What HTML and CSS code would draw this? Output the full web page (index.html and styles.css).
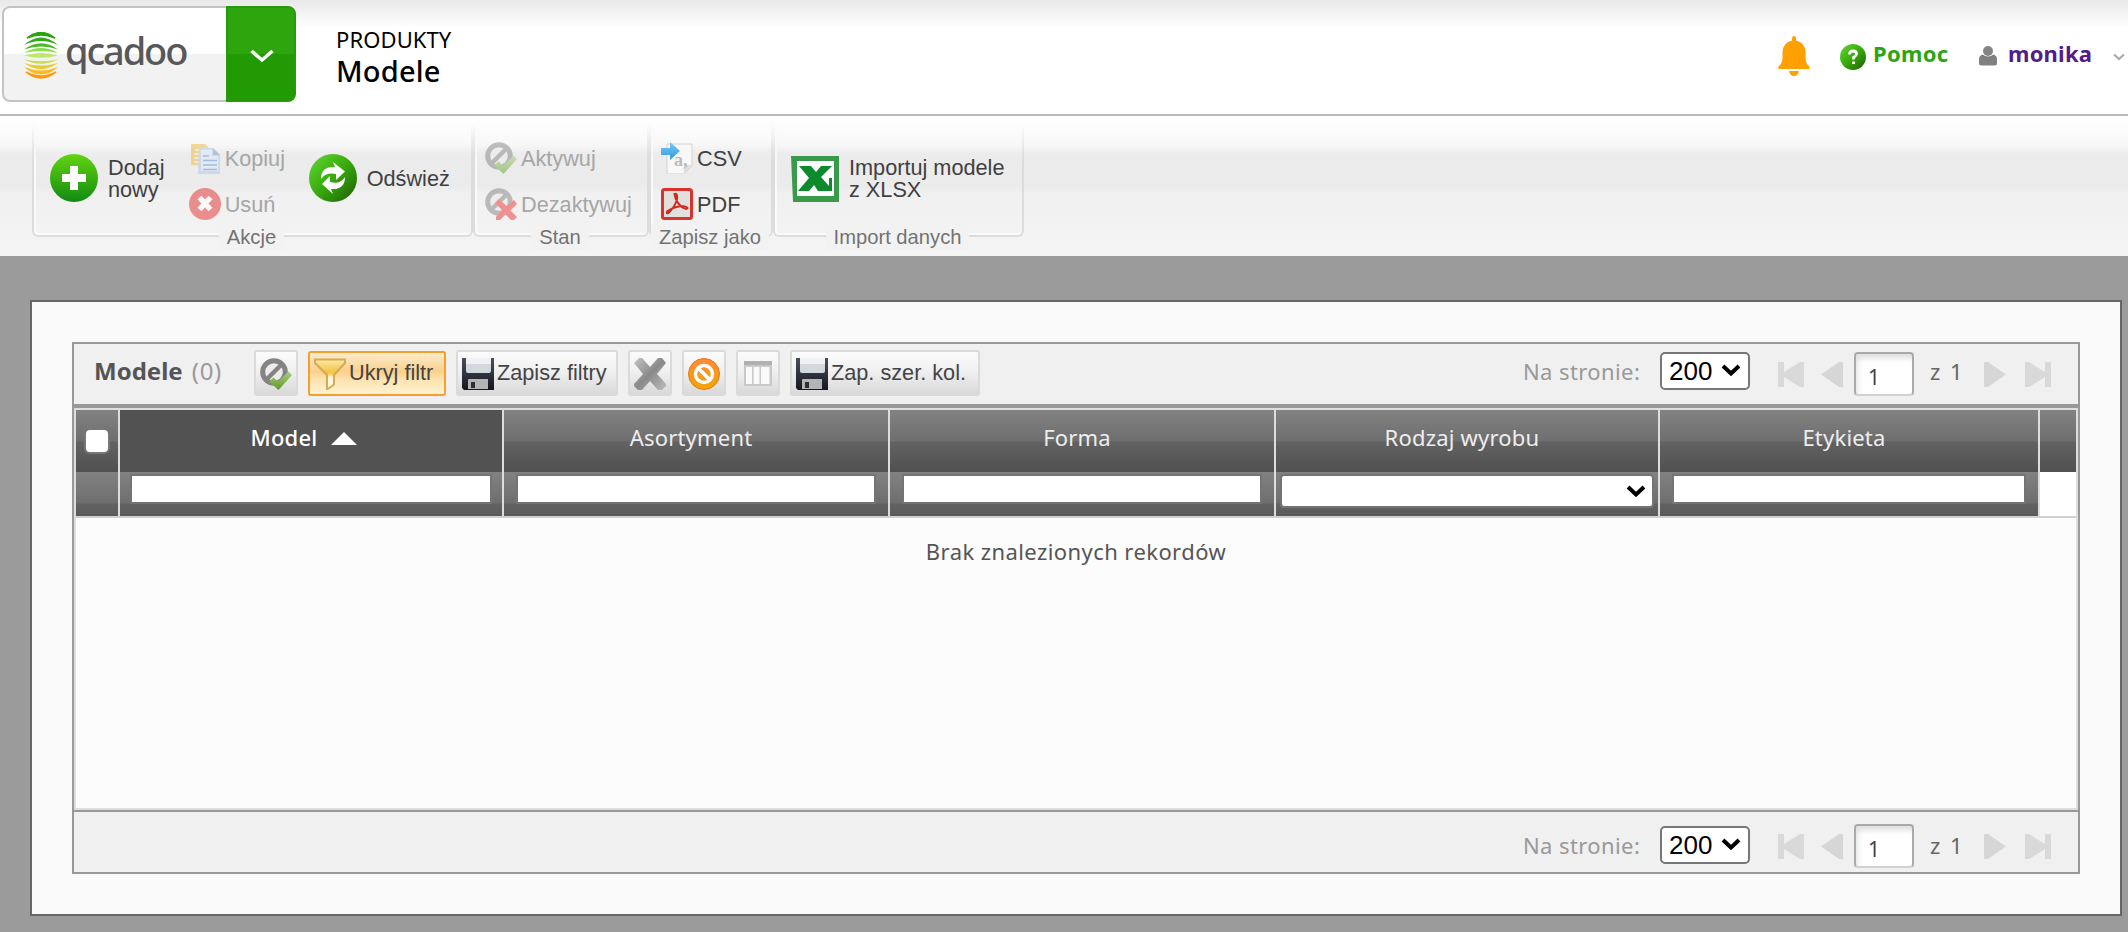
FILE: index.html
```html
<!DOCTYPE html>
<html lang="pl">
<head>
<meta charset="utf-8">
<title>qcadoo - Modele</title>
<link rel="stylesheet" href="styles.css">
</head>
<body>
<svg class="defs" width="0" height="0">
  <defs>
    <linearGradient id="gGreen" x1="0" y1="0" x2="0" y2="1"><stop offset="0" stop-color="#62d411"/><stop offset="1" stop-color="#118a12"/></linearGradient>
    <linearGradient id="gGreen2" x1="0" y1="0" x2="1" y2="1"><stop offset="0" stop-color="#63da33"/><stop offset=".5" stop-color="#38a90c"/><stop offset="1" stop-color="#1c5c04"/></linearGradient>
    <linearGradient id="gCheck" x1="0" y1="0" x2="0" y2="1"><stop offset="0" stop-color="#a9cf7c"/><stop offset="1" stop-color="#5f9a26"/></linearGradient>
    <linearGradient id="gX" x1="0" y1="0" x2="1" y2="1"><stop offset="0" stop-color="#c4c4c4"/><stop offset=".5" stop-color="#8a8a8a"/><stop offset="1" stop-color="#bdbdbd"/></linearGradient>
    <linearGradient id="gDisk" x1="0" y1="0" x2="0" y2="1"><stop offset="0" stop-color="#4a4f5c"/><stop offset="1" stop-color="#14171f"/></linearGradient>
    <linearGradient id="gOrange" x1="0" y1="0" x2="0" y2="1"><stop offset="0" stop-color="#ff8a3c"/><stop offset="1" stop-color="#f2a500"/></linearGradient>
    <linearGradient id="gArrow" x1="0" y1="0" x2="0" y2="1"><stop offset="0" stop-color="#7cc8f2"/><stop offset="1" stop-color="#2f9be0"/></linearGradient>
    <linearGradient id="gFunnel" x1="0" y1="0" x2="0" y2="1"><stop offset="0" stop-color="#fbe9a8"/><stop offset=".45" stop-color="#f2c33c"/><stop offset=".6" stop-color="#fff4d0"/><stop offset="1" stop-color="#ffffff"/></linearGradient>
  </defs>
  <symbol id="ban" viewBox="0 0 32 32"><circle cx="14" cy="14" r="11.3" fill="#ececec" stroke="#848484" stroke-width="5"/><path d="M6.5 21.5 21.5 6.5" stroke="#848484" stroke-width="4.5"/></symbol>
  <symbol id="activate" viewBox="0 0 32 32"><use href="#ban" width="32" height="32"/><path d="M9 23.5l4.5-4 4.8 4L28.5 13.500l3.500 3.500L18.500 32z" fill="url(#gCheck)"/></symbol>
  <symbol id="deactivate" viewBox="0 0 32 32"><use href="#ban" width="32" height="32"/><path d="M10 15l4-4 7.500 7 7.500-6 3 4-6.500 6.500L32 29l-3 3h-3l-5.500-5.500L15 32h-4v-3l6-7z" fill="#e33"/></symbol>
  <symbol id="disk" viewBox="0 0 32 32"><path d="M0 0h32v32H2l-2-2z" fill="url(#gDisk)"/><path d="M4 0h25v13q0 2-2 2H6q-2 0-2-2z" fill="#d3d8de"/><path d="M4 0h25v6H4z" fill="#eef0f3"/><path d="M6 22q0-1 1-1h19v10H6z" fill="#b4b4b4"/><path d="M9 24h4v6H9z" fill="#2a2e38"/></symbol>
  <symbol id="first" viewBox="0 0 26 26"><path d="M0 0h6v10L22 0h4v25h-4L6 15v10H0z" fill="#d9d9d9"/></symbol>
  <symbol id="prev" viewBox="0 0 26 26"><path d="M1 12.500 19 0h4v25h-4z" fill="#d6d6d6"/></symbol>
</svg>

<header class="header">
  <div class="brand">
    <div class="logo">
      <svg class="logo-mark" viewBox="0 0 34 47">
        <path d="M3 6Q17-5 31 6 17 0 3 6z" fill="#2aa30c" stroke="#2aa30c" stroke-width="1.500"/>
        <path d="M0 13Q17-2 34 13 17 5 0 13z" fill="#35a818"/>
        <path d="M0 17.500Q17 5 34 17.500 17 11.500 0 17.500z" fill="#4cb82a"/>
        <path d="M0 21Q17 11 34 21 17 17 0 21z" fill="#86e04a"/>
        <path d="M0 23.500Q17 18.500 34 23.500 17 28 0 23.500z" fill="#bfe66a"/>
        <path d="M0 27.500Q17 36 34 27.500 17 31 0 27.500z" fill="#ccdc4e"/>
        <path d="M0 31Q17 43 34 31 17 36 0 31z" fill="#e8cb30"/>
        <path d="M0 35Q17 50 34 35 17 42 0 35z" fill="#ffb81e"/>
        <path d="M2 40Q17 52 32 40 17 48 2 40z" fill="#ff9a0a" stroke="#ff9a0a" stroke-width="1.500"/>
      </svg>
      <span class="logo-text">qcadoo</span>
    </div>
    <div class="brand-toggle"><svg viewBox="0 0 24 14"><path d="M1.500 2 12 11 22.500 2" fill="none" stroke="#fff" stroke-width="3.500"/></svg></div>
  </div>
  <div class="crumb"><div class="crumb-top">PRODUKTY</div><div class="crumb-page">Modele</div></div>
  <div class="user-area">
    <svg class="bell" viewBox="0 0 32 40"><path d="M14 3q0-3 2-3t2 3v1.500q9 2 9.500 11.500V22q0 5 3.500 8 1 1 .5 3H.5Q0 31 1 30q3.500-3 3.500-8v-6Q5 6.500 14 4.500zM11 35h10q-1 5-5 5t-5-5z" fill="#ff9f00"/></svg>
    <svg class="help-icon" viewBox="0 0 26 26"><circle cx="13" cy="13" r="13" fill="url(#gGreen2)"/><path d="M9.500 10.500Q9.500 7 13 7t3.500 3Q16.500 11.500 13.500 13.500V15.500M13.500 17.500v2.500" fill="none" stroke="#fff" stroke-width="2.800"/></svg>
    <a class="help">Pomoc</a>
    <svg class="person" viewBox="0 0 18 20"><circle cx="9" cy="5" r="5" fill="#858585"/><path d="M0 17v-4q0-3.500 3.500-4.500 2.500 2 5.500 2t5.500-2Q18 9.500 18 13v4q0 2.500-2.500 2.500h-13Q0 19.500 0 17z" fill="#808080"/></svg>
    <a class="user">monika</a>
    <svg class="user-chev" viewBox="0 0 12 8"><path d="M1 1.500 6 6l5-4.500" fill="none" stroke="#aaa" stroke-width="2.200"/></svg>
  </div>
</header>

<nav class="ribbon">
  <section class="group g-actions">
    <div class="group-box">
      <div class="big"><svg viewBox="0 0 48 48"><circle cx="24" cy="24" r="24" fill="url(#gGreen)"/><path d="M20 12h8v8h8v8h-8v8h-8v-8h-8v-8h8z" fill="#fff"/></svg><span>Dodaj<br>nowy</span></div>
      <div class="stack stack-edit">
        <div class="small off"><svg viewBox="0 0 32 32"><path d="M2 2h14l4 4v17H2z" fill="#edb93c"/><path d="M6 8h8M5 12h6M5 16h6M5 20h6" stroke="#fff3c8" stroke-width="1.500"/><path d="M10 6h14l7 7v19H9z" fill="#a9cae9"/><path d="M12 8h11v6h6v15H12z" fill="#dbe8f5"/><path d="M24 6v7h7" fill="#6b9fd4"/><path d="M14 14h6M14 18.500h14M14 23h14M14 27.500h14" stroke="#5b8fcb" stroke-width="1.600"/></svg><span>Kopiuj</span></div>
        <div class="small off"><svg viewBox="0 0 32 32"><circle cx="16" cy="16" r="16" fill="#e22c2c"/><path d="M10.500 9.500 21.500 21.500M21.500 9.500 10.500 21.500" stroke="#fff" stroke-width="5.500"/></svg><span>Usuń</span></div>
      </div>
      <div class="big refresh"><svg viewBox="0 0 48 48"><circle cx="24" cy="24" r="24" fill="url(#gGreen2)"/><path d="M12 25Q12 12 26 13l-2-5 12 9.500-9 8.500V20Q17 18 12 25z" fill="#fff"/><path d="M36 23Q36 36 22 35l2 5-11-10 8-8v6Q31 31 36 23z" fill="#fff"/></svg><span>Odśwież</span></div>
    </div>
    <div class="group-name">Akcje</div>
  </section>
  <section class="group g-state">
    <div class="group-box">
      <div class="stack">
        <div class="small off"><svg><use href="#activate"/></svg><span>Aktywuj</span></div>
        <div class="small off"><svg><use href="#deactivate"/></svg><span>Dezaktywuj</span></div>
      </div>
    </div>
    <div class="group-name">Stan</div>
  </section>
  <section class="group g-save">
    <div class="group-box">
      <div class="stack">
        <div class="small"><svg viewBox="0 0 32 32"><path d="M6 2h25v22l-8 8H6z" fill="#f8f8f8" stroke="#d2d2d2"/><path d="M31 23h-8v9z" fill="#dedede"/><text x="13" y="24" class="csv-glyph">a,</text><path d="M0 6h9V0l10 9-10 9v-5H0z" fill="url(#gArrow)"/></svg><span>CSV</span></div>
        <div class="small"><svg viewBox="0 0 32 32"><rect x="1.500" y="1.500" width="29" height="29" rx="2" fill="#e2e0dd" stroke="#d8332c" stroke-width="3"/><path d="M13.500 6q4-1 2 7-2 6-8 12-3 1-1-2 6-4 13-5 6 0 7 2-1 2-5-.5Q15 15 13.500 6z" fill="none" stroke="#cf2a22" stroke-width="2"/></svg><span>PDF</span></div>
      </div>
    </div>
    <div class="group-name">Zapisz jako</div>
  </section>
  <section class="group g-import">
    <div class="group-box">
      <div class="big"><svg viewBox="0 0 48 48"><path d="M0 2h48v46H2z" fill="#3a9a4c"/><path d="M6 7h37v35H6z" fill="#fff"/><path d="M8 12h12l5 6 5-6h11L30 23l8 9V24h3v13H27l-4-6-5 6H7l11-13z" fill="#0c8a2c"/></svg><span>Importuj modele<br>z XLSX</span></div>
    </div>
    <div class="group-name">Import danych</div>
  </section>
</nav>

<main class="panel">
  <div class="grid">
    <div class="bar">
      <div class="grid-title">Modele <span>(0)</span></div>
      <div class="btn icon"><svg><use href="#activate"/></svg></div>
      <div class="btn filter-on"><svg viewBox="0 0 32 32"><path d="M1 1.500h30V5L20 17v9.500l-7 5V17L1 5z" fill="url(#gFunnel)" stroke="#d3ac55" stroke-width="2"/></svg><span>Ukryj filtr</span></div>
      <div class="btn save-filter"><svg><use href="#disk"/></svg><span>Zapisz filtry</span></div>
      <div class="btn icon"><svg viewBox="0 0 32 32"><path d="M0 5 5 0h3l8 9 8-9h4l4 5-9 11 9 10v2l-4 4h-4l-8-9-8 9H4l-4-4v-2l9-10z" fill="url(#gX)"/></svg></div>
      <div class="btn icon"><svg viewBox="0 0 32 32"><circle cx="16" cy="16" r="15.500" fill="url(#gOrange)" stroke="#e07a1a"/><circle cx="16" cy="16" r="8.500" fill="none" stroke="#fff" stroke-width="3.400"/><path d="M10 10l12 12" stroke="#fff" stroke-width="3.800"/></svg></div>
      <div class="btn icon"><svg viewBox="0 0 32 32"><path d="M2 3h28v25H2z" fill="#c9c9c9"/><path d="M2 3h28v4H2z" fill="#b0b0b0"/><path d="M4 9h6v17H4zM11.500 9h6v17h-6zM19 9h8.500v17H19z" fill="#fafafa"/></svg></div>
      <div class="btn save-cols"><svg><use href="#disk"/></svg><span>Zap. szer. kol.</span></div>
      <div class="pager">
        <span class="per-page">Na stronie:</span>
        <div class="pick">200<svg viewBox="0 0 20 12"><path d="M2 2l8 7.500L18 2" fill="none" stroke="#000" stroke-width="4"/></svg></div>
        <svg class="nav n1"><use href="#first"/></svg><svg class="nav n2"><use href="#prev"/></svg>
        <div class="page-no">1</div><span class="of">z 1</span>
        <svg class="nav flip n3"><use href="#prev"/></svg><svg class="nav flip n4"><use href="#first"/></svg>
      </div>
    </div>
    <div class="table">
      <div class="row head">
        <div class="cell check-cell"><i class="check"></i></div>
        <div class="cell sorted"><span>Model</span><svg class="sort" viewBox="0 0 26 13"><path d="M0 13 13 0l13 13z" fill="#fff"/></svg></div>
        <div class="cell">Asortyment</div>
        <div class="cell">Forma</div>
        <div class="cell">Rodzaj wyrobu</div>
        <div class="cell">Etykieta</div>
        <div class="cell"></div>
      </div>
      <div class="row filters">
        <div class="cell"></div>
        <div class="cell first-field"><div class="field"></div></div>
        <div class="cell"><div class="field"></div></div>
        <div class="cell"><div class="field"></div></div>
        <div class="cell choose-cell"><div class="field choose"><svg viewBox="0 0 20 12"><path d="M2 2l8 7.500L18 2" fill="none" stroke="#000" stroke-width="4"/></svg></div></div>
        <div class="cell"><div class="field"></div></div>
        <div class="cell blank"></div>
      </div>
      <div class="empty">Brak znalezionych rekordów</div>
    </div>
    <div class="bar foot">
      <div class="pager">
        <span class="per-page">Na stronie:</span>
        <div class="pick">200<svg viewBox="0 0 20 12"><path d="M2 2l8 7.500L18 2" fill="none" stroke="#000" stroke-width="4"/></svg></div>
        <svg class="nav n1"><use href="#first"/></svg><svg class="nav n2"><use href="#prev"/></svg>
        <div class="page-no">1</div><span class="of">z 1</span>
        <svg class="nav flip n3"><use href="#prev"/></svg><svg class="nav flip n4"><use href="#first"/></svg>
      </div>
    </div>
  </div>
</main>
</body>
</html>
```
FILE: styles.css
```css
* { box-sizing: border-box; }
body {
  margin: 0;
  height: 932px;
  overflow: hidden;
  background: #9b9b9b;
  font-family: "Noto Sans", "Open Sans", sans-serif;
  font-size: 22px;
  white-space: nowrap;
}
svg { display: block; flex: none; }
.defs { position: absolute; }

/* header */
.header {
  display: flex;
  height: 116px;
  padding: 6px 0 0 2px;
  border-bottom: 2px solid #bbb;
  background: linear-gradient(#e9e9e9, #fff 28px);
}
.brand { display: flex; width: 294px; height: 96px; }
.logo {
  display: flex;
  width: 224px;
  padding-left: 20px;
  border: 2px solid #c3c3c3;
  border-right: 0;
  border-radius: 8px 0 0 8px;
  background: linear-gradient(#fff 46px, #f2f2f2 46px);
}
.logo-mark { width: 34px; height: 47px; margin-top: 24px; }
.logo-text {
  margin: 17px 0 0 7px;
  font-size: 38px;
  line-height: 50px;
  font-weight: 500;
  letter-spacing: -2.1px;
  color: #58585a;
}
.brand-toggle {
  width: 70px;
  padding: 42px 0 0 22px;
  border: 2px solid #279a0b;
  border-radius: 0 8px 8px 0;
  background: linear-gradient(#2ca60c 46px, #229a03 46px);
}
.brand-toggle svg { width: 24px; height: 14px; margin-top: -1px; }
.crumb { margin-left: 40px; color: #000; }
.crumb-top { height: 30px; margin-top: 18px; line-height: 31px; font-size: 22px; letter-spacing: .1px; }
.crumb-page { line-height: 33px; font-size: 29px; font-weight: 500; letter-spacing: .2px; }
.user-area { display: flex; margin-left: auto; font-weight: 700; line-height: 30px; }
.bell { width: 32px; height: 40px; margin: 30px 30px 0 0; }
.help-icon { width: 26px; height: 26px; margin: 38px 7px 0 0; }
.help { width: 106px; margin-top: 32px; color: #2ba60f; letter-spacing: .3px; }
.person { width: 18px; height: 20px; margin: 40px 11px 0 0; }
.user { width: 105px; margin-top: 32px; color: #551a8b; letter-spacing: .2px; }
.user-chev { width: 12px; height: 8px; margin: 47px 3px 0 0; }

/* ribbon */
.ribbon {
  display: flex;
  height: 140px;
  padding-left: 32px;
  background: linear-gradient(#fff, #f8f8f8 28px, #ececec 38px, #ebebeb 70px, #f0f0f0 76px, #f4f4f4);
  font-family: "Liberation Sans", Arial, sans-serif;
  font-size: 21.700px;
  color: #404040;
}
.group { position: relative; height: 140px; }
.group::before {
  content: "";
  position: absolute;
  inset: 8px 0 19px;
  border: 2px solid #dcdcdc;
  border-top: 0;
  border-radius: 0 0 6px 6px;
  box-shadow: inset 2px -2px 0 #fafafa;
  mask-image: linear-gradient(transparent, #000 40px);
}
.g-actions { width: 441px; }
.g-state { width: 176px; }
.g-save { width: 124px; }
.g-import { width: 251px; }
.group-box { position: relative; display: flex; height: 108px; }
.big { display: flex; align-items: flex-start; margin: 38px 0 0 18px; line-height: 22px; height: 48px; }
.big svg { width: 48px; height: 48px; margin-right: 10px; }
.big span { align-self: center; padding-top: 2px; }
.refresh { margin-left: 20px; }
.refresh span { padding-top: 1px; }
.stack { margin: 26px 0 0 12px; }
.stack-edit { margin-left: 24px; width: 100px; }
.small { display: flex; align-items: center; height: 32px; margin-bottom: 14px; }
.small svg { width: 32px; height: 32px; margin-right: 4px; }
.small span { padding-top: 2px; }
.off { color: #a6a6a6; }
.off svg { opacity: .5; }
.csv-glyph { font: bold 18px "Liberation Serif", serif; fill: #bbb; }
.group-name {
  position: relative;
  left: -1px;
  width: max-content;
  margin: 0 auto;
  padding: 0 8px;
  line-height: 26px;
  font-size: 20.200px;
  color: #727272;
  background: #f2f2f2;
}

/* content panel */
.panel {
  width: 2092px;
  height: 616px;
  margin: 44px 0 0 30px;
  padding: 40px;
  border: 2px solid #666;
  background: #fafafa;
}
.grid { width: 2008px; height: 532px; border: 2px solid #999; }
.bar { display: flex; height: 60px; background: #f0f0f0; }
.grid-title {
  width: 180px;
  padding: 11px 0 0 20px;
  font-size: 24px;
  line-height: 32px;
  font-weight: 700;
  color: #555;
}
.grid-title span { font-weight: 400; color: #999; margin-left: 3px; letter-spacing: .6px; }
.btn {
  display: flex;
  height: 46px;
  margin: 6px 10px 0 0;
  padding: 6px 0 0 4px;
  border: 2px solid #dadada;
  border-radius: 3px;
  background: linear-gradient(#fcfcfc, #f0f0f0 45%, #d9d9d9);
  font: 21.700px/30px "Liberation Sans", Arial, sans-serif;
  color: #444;
}
.btn svg { width: 32px; height: 32px; margin-right: 3px; }
.icon { width: 44px; }
.filter-on {
  width: 138px;
  height: 45px;
  margin-top: 7px;
  padding-top: 5px;
  border-color: #f5a02e;
  background: linear-gradient(#fdeccc, #fad08c 45%, #fde3ae 65%, #fff2d4);
}
.save-filter { width: 162px; }
.save-cols { width: 190px; }
.pager { display: flex; margin-left: auto; width: 554px; }
.per-page { width: 137px; margin: 13px 0 0 -1px; line-height: 28px; color: #999; letter-spacing: .4px; }
.pick {
  display: flex;
  width: 90px;
  height: 38px;
  margin-top: 8px;
  padding-left: 7px;
  border: 2px solid #777;
  border-radius: 5px;
  background: #fff;
  font: 26px/34px "Liberation Sans", Arial, sans-serif;
  color: #000;
}
.pick svg { width: 20px; height: 12px; margin: 10px 0 0 9px; }
.nav { width: 26px; height: 26px; margin-top: 18px; }
.n1 { margin-left: 28px; }
.n2 { margin-left: 16px; }
.n3 { margin-left: 18px; }
.n4 { margin-left: 18px; }
.flip { transform: scaleX(-1); }
.page-no {
  width: 60px;
  height: 44px;
  margin: 8px 0 0 8px;
  padding: 3px 0 0 12px;
  border: 2px solid #aaa;
  border-bottom-color: #d0d0d0;
  border-radius: 4px;
  background: #fff;
  box-shadow: inset 3px 6px 6px -2px #ddd;
  font-size: 21px;
  line-height: 40px;
  color: #444;
}
.of { width: 33px; margin: 13px 0 0 16px; line-height: 28px; word-spacing: 4px; color: #666; }

.table { height: 402px; border: 2px solid #ddd; background: #fcfcfc; box-shadow: 0 -4px #999; margin-top: 4px; }
.row { display: grid; grid-template-columns: 44px 384px 386px 386px 384px 380px 36px; }
.cell { display: flex; align-items: center; justify-content: center; border-right: 2px solid #ddd; }
.cell:last-child { border-right: 0; }
.head .cell {
  height: 62px;
  padding: 0 10px 8px 0;
  color: #eee;
  letter-spacing: .2px;
  background: linear-gradient(#828282, #6e6e6e 31px, #626262 32px, #505050);
}
.head .sorted { color: #fff; background: #525252; font-weight: 500; padding-right: 14px; }
.sort { width: 26px; height: 13px; margin: 2px 0 0 14px; }
.head .check-cell { padding: 0; }
.check { width: 26px; height: 26px; border: 2px solid #777; border-radius: 6px; background: #fff; }
.filters { border-bottom: 2px solid #d0d0d0; }
.filters .cell { height: 44px; padding: 2px 12px 0; align-items: flex-start; background: linear-gradient(#828282, #6e6e6e 31px, #626262 32px, #5a5a5a); }
.filters .blank { background: #fff; }
.filters .first-field { padding: 2px 10px 0; }
.field { flex: 1; height: 30px; border: 2px solid #747474; background: #fff; }
.filters .choose-cell { padding: 2px 4px 0; }
.choose { height: 34px; border-radius: 4px; }
.choose svg { width: 20px; height: 12px; margin: 9px 6px 0 auto; }
.empty { padding: 17px 0 0; line-height: 32px; text-align: center; color: #555; letter-spacing: .42px; }
.foot { height: 62px; border-top: 2px solid #999; }
.foot .per-page, .foot .of { margin-top: 19px; }
.foot .pick { margin-top: 14px; }
.foot .page-no { margin-top: 12px; }
.foot .nav { margin-top: 22px; }
```
